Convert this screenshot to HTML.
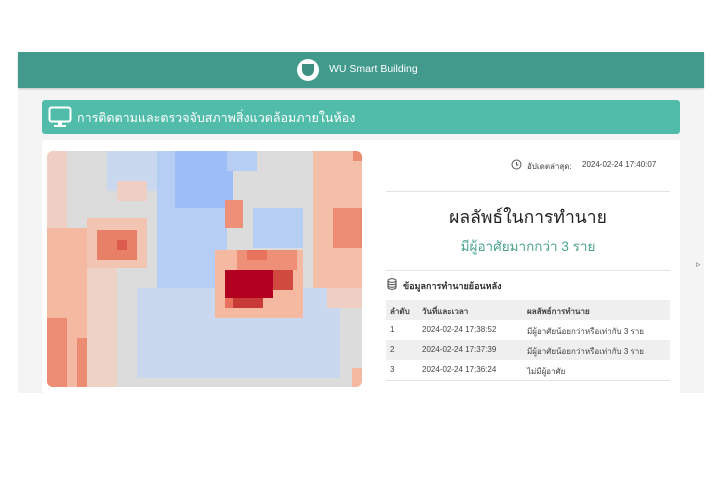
<!DOCTYPE html>
<html><head><meta charset="utf-8"><style>
*{margin:0;padding:0;box-sizing:border-box}
body{width:724px;height:500px;background:#fff;position:relative;overflow:hidden;font-family:"Liberation Sans","Noto Sans CJK SC",sans-serif;color:#333}
.app{position:absolute;left:18px;top:52px;width:686px;height:341px;background:#f4f4f4}
.hdr{position:absolute;left:0;top:0;width:686px;height:36px;background:#419a8c;box-shadow:0 1px 2px rgba(0,0,0,.2)}
.logo{position:absolute;left:279px;top:7px;width:22px;height:22px;border-radius:50%;background:#fff}
.logo i{position:absolute;left:5px;top:5px;width:12px;height:12px;background:#3d8f82;border-radius:0 0 6px 6px}
.hdr span{position:absolute;left:311px;top:11px;font-size:10.5px;color:#fff}
.title{position:absolute;left:24px;top:48px;width:638px;height:34px;background:#52bcaa;border-radius:3px}
.title span{position:absolute;left:35px;top:8px;font-size:12.5px;color:#fff}
.card{position:absolute;left:24px;top:88px;width:638px;height:253px;background:#fff;border-radius:3px}
.t{position:absolute;white-space:nowrap}
.sm{font-size:8px;color:#444}
.line{position:absolute;height:1px;background:#e4e4e4}
</style></head><body>
<div class="app">
 <div class="hdr"><div class="logo"><i></i></div><span>WU Smart Building</span></div>
 <div class="title">
  <svg style="position:absolute;left:6px;top:6px" width="24" height="22" viewBox="0 0 24 22"><rect x="1.5" y="1.5" width="21" height="14" rx="2" fill="none" stroke="#fff" stroke-width="2"/><rect x="10" y="16" width="4" height="3" fill="#fff"/><rect x="6" y="19" width="12" height="2" fill="#fff"/></svg>
  <span>การติดตามและตรวจจับสภาพสิ่งแวดล้อมภายในห้อง</span></div>
</div>
<div class="card" style="left:42px;top:140px;position:absolute"></div>
<svg style="position:absolute;left:47px;top:151px;border-radius:6px" width="315" height="236" viewBox="0 0 315 236">
<rect width="315" height="236" fill="#dcdcdc"/>
<rect x="110" y="0" width="70" height="167" fill="#b6cef4"/>
<rect x="128" y="0" width="58" height="57" fill="#9dbdf7"/>
<rect x="60" y="0" width="50" height="40" fill="#cad8ef"/>
<rect x="90" y="137" width="203" height="90" fill="#cad8ef"/>
<rect x="180" y="110" width="60" height="40" fill="#cad8ef"/>
<rect x="206" y="57" width="50" height="40" fill="#b6cef4"/>
<rect x="180" y="0" width="30" height="20" fill="#b6cef4"/>
<rect x="0" y="0" width="20" height="77" fill="#efcfc3"/>
<rect x="0" y="77" width="40" height="159" fill="#f4b9a0"/>
<rect x="40" y="110" width="30" height="126" fill="#efd2c6"/>
<rect x="0" y="167" width="20" height="69" fill="#ec8c72"/>
<rect x="30" y="187" width="10" height="49" fill="#ec8c72"/>
<rect x="40" y="67" width="60" height="50" fill="#f2c4b2"/>
<rect x="50" y="79" width="40" height="30" fill="#e88068"/>
<rect x="70" y="89" width="10" height="10" fill="#dd5b4c"/>
<rect x="70" y="30" width="30" height="20" fill="#efcfc3"/>
<rect x="266" y="0" width="49" height="137" fill="#f3bfa8"/>
<rect x="306" y="0" width="9" height="10" fill="#ec8c72"/>
<rect x="286" y="57" width="29" height="40" fill="#ec8c72"/>
<rect x="280" y="137" width="35" height="20" fill="#efcfc3"/>
<rect x="305" y="217" width="10" height="19" fill="#f4b9a0"/>
<rect x="168" y="99" width="88" height="68" fill="#f4b9a0"/>
<rect x="178" y="49" width="18" height="28" fill="#ee9078"/>
<rect x="190" y="99" width="60" height="20" fill="#ee9078"/>
<rect x="200" y="99" width="20" height="10" fill="#e8725c"/>
<rect x="178" y="119" width="48" height="28" fill="#b40020"/>
<rect x="226" y="119" width="20" height="20" fill="#d04a40"/>
<rect x="186" y="147" width="30" height="10" fill="#c83a35"/>
<rect x="178" y="147" width="8" height="10" fill="#e8725c"/>
</svg>
<svg style="position:absolute;left:511px;top:159px" width="11" height="11" viewBox="0 0 11 11"><circle cx="5.5" cy="5.5" r="4.5" fill="none" stroke="#555" stroke-width="1"/><path d="M5.5 3v3h2" fill="none" stroke="#555"/></svg>
<div class="t sm" style="left:527px;top:160px">อัปเดตล่าสุด:</div>
<div class="t sm" style="left:582px;top:160px">2024-02-24 17:40:07</div>
<div class="line" style="left:386px;top:191px;width:284px"></div>
<div class="t" style="left:386px;width:284px;text-align:center;top:203px;font-size:17.5px;color:#222">ผลลัพธ์ในการทำนาย</div>
<div class="t" style="left:386px;width:284px;text-align:center;top:235px;font-size:13.5px;color:#4aa38e">มีผู้อาศัยมากกว่า 3 ราย</div>
<div class="line" style="left:386px;top:270px;width:284px"></div>
<svg style="position:absolute;left:387px;top:278px" width="10" height="12" viewBox="0 0 10 12"><ellipse cx="5" cy="2.5" rx="4" ry="1.8" fill="none" stroke="#444"/><path d="M1 2.5v7c0 1 1.8 1.8 4 1.8s4-.8 4-1.8v-7M1 5c0 1 1.8 1.8 4 1.8S9 6 9 5M1 7.5c0 1 1.8 1.8 4 1.8s4-.8 4-1.8" fill="none" stroke="#444"/></svg>
<div class="t" style="left:403px;top:279px;font-size:9px;font-weight:bold;color:#333">ข้อมูลการทำนายย้อนหลัง</div>
<div style="position:absolute;left:386px;top:300px;width:284px;height:20px;background:#efefef"></div>
<div style="position:absolute;left:386px;top:340px;width:284px;height:20px;background:#efefef"></div>
<div class="line" style="left:386px;top:380px;width:284px"></div>
<div class="t sm" style="left:390px;top:305px;font-weight:bold">ลำดับ</div>
<div class="t sm" style="left:422px;top:305px;font-weight:bold">วันที่และเวลา</div>
<div class="t sm" style="left:527px;top:305px;font-weight:bold">ผลลัพธ์การทำนาย</div>
<div class="t sm" style="left:390px;top:325px">1</div><div class="t sm" style="left:422px;top:325px">2024-02-24 17:38:52</div><div class="t sm" style="left:527px;top:325px">มีผู้อาศัยน้อยกว่าหรือเท่ากับ 3 ราย</div>
<div class="t sm" style="left:390px;top:345px">2</div><div class="t sm" style="left:422px;top:345px">2024-02-24 17:37:39</div><div class="t sm" style="left:527px;top:345px">มีผู้อาศัยน้อยกว่าหรือเท่ากับ 3 ราย</div>
<div class="t sm" style="left:390px;top:365px">3</div><div class="t sm" style="left:422px;top:365px">2024-02-24 17:36:24</div><div class="t sm" style="left:527px;top:365px">ไม่มีผู้อาศัย</div>
<div class="t" style="left:696px;top:259px;font-size:9px;color:#777">▹</div>
</body></html>
